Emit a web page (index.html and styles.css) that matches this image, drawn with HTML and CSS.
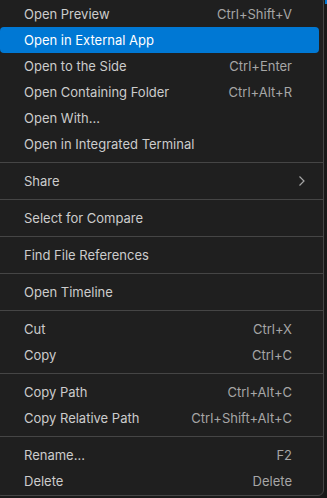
FILE: index.html
```html
<!DOCTYPE html>
<html lang="en">
<head>
    <meta charset="UTF-8">
    <title>Context Menu</title>
    <link rel="stylesheet" href="styles.css">
</head>
<body>
    <div class="page">
        <div class="menu">
            <div class="item"><span class="label">Open Preview</span><span class="key">Ctrl+Shift+V</span></div>
            <div class="item active"><span class="label">Open in External App</span></div>
            <div class="item"><span class="label">Open to the Side</span><span class="key">Ctrl+Enter</span></div>
            <div class="item"><span class="label">Open Containing Folder</span><span class="key">Ctrl+Alt+R</span></div>
            <div class="item"><span class="label">Open With...</span></div>
            <div class="item"><span class="label">Open in Integrated Terminal</span></div>
            <div class="sep"></div>
            <div class="item submenu">
                <span class="label">Share</span>
                <svg class="chevron" width="8" height="12" viewBox="0 0 8 12" fill="none" stroke="currentColor" stroke-width="1.2">
                    <polyline points="1.5 1.5 6 6 1.5 10.5"></polyline>
                </svg>
            </div>
            <div class="sep"></div>
            <div class="item"><span class="label">Select for Compare</span></div>
            <div class="sep"></div>
            <div class="item"><span class="label">Find File References</span></div>
            <div class="sep"></div>
            <div class="item"><span class="label">Open Timeline</span></div>
            <div class="sep"></div>
            <div class="item"><span class="label">Cut</span><span class="key">Ctrl+X</span></div>
            <div class="item"><span class="label">Copy</span><span class="key">Ctrl+C</span></div>
            <div class="sep"></div>
            <div class="item"><span class="label">Copy Path</span><span class="key">Ctrl+Alt+C</span></div>
            <div class="item"><span class="label">Copy Relative Path</span><span class="key">Ctrl+Shift+Alt+C</span></div>
            <div class="sep"></div>
            <div class="item"><span class="label">Rename...</span><span class="key">F2</span></div>
            <div class="item"><span class="label">Delete</span><span class="key">Delete</span></div>
        </div>
        <div class="edge"><div class="edge-mark"></div></div>
    </div>
</body>
</html>
```
FILE: styles.css
```css
* {
    margin: 0;
    padding: 0;
    box-sizing: border-box;
}

body {
    background: #1a1a1a;
    color: #cccccc;
    font-family: 'Inter', 'Noto Sans', sans-serif;
    font-size: 13px;
    overflow: hidden;
}

.page {
    display: flex;
    align-items: flex-start;
    height: 498px;
}

.menu {
    flex: none;
    width: 329px;
    margin: -4px 0 0 -5px;
    padding: 4px 0 1px;
    background: #1f1f1f;
    border: 1px solid #454545;
    border-radius: 6px;
}

.item {
    display: flex;
    align-items: center;
    justify-content: space-between;
    height: 26px;
    margin: 0 4px;
    padding: 0 27px 0 24px;
    border-radius: 4px;
    line-height: 26px;
}

.item.active {
    background: #0078d4;
    color: #ffffff;
}

.key {
    color: #a6a6a6;
}

.submenu {
    padding-right: 13px;
}

.chevron {
    color: #a6a6a6;
}

.sep {
    height: 1px;
    margin: 5px 0;
    background: #454545;
}

.edge {
    flex: 1;
    align-self: stretch;
    background: #181818;
}

.edge-mark {
    width: 2px;
    height: 4px;
    margin-left: 1px;
    background: #0078d4;
}
```
